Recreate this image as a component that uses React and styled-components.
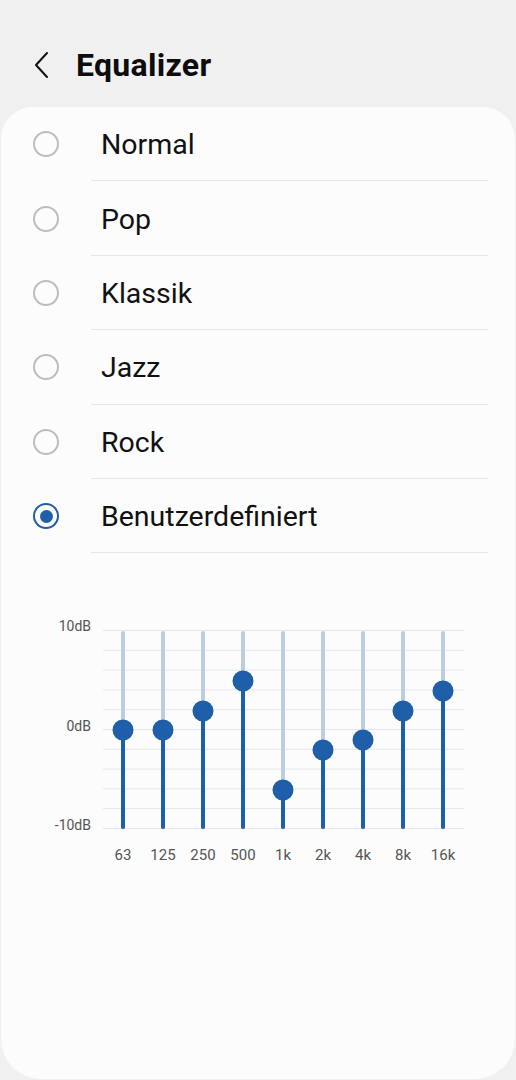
import React from "react";
import styled, { createGlobalStyle } from "styled-components";

const GlobalStyle = createGlobalStyle`
  html, body {
    margin: 0;
    padding: 0;
    background: #f0f0f0;
    font-family: Roboto, "Noto Sans", sans-serif;
    color: #111;
  }
`;

const presets = ["Normal", "Pop", "Klassik", "Jazz", "Rock", "Benutzerdefiniert"];

const bands = [
  { label: "63", value: 0 },
  { label: "125", value: 0 },
  { label: "250", value: 2 },
  { label: "500", value: 5 },
  { label: "1k", value: -6 },
  { label: "2k", value: -2 },
  { label: "4k", value: -1 },
  { label: "8k", value: 2 },
  { label: "16k", value: 4 },
];

const BLUE = "#1f5ea8";

const Screen = styled.div`
  width: 516px;
  min-height: 1080px;
  display: flex;
  flex-direction: column;
`;

const Header = styled.header`
  height: 107px;
  display: flex;
  align-items: center;
  padding: 22px 0 0 30px;
  box-sizing: border-box;
  gap: 22px;
`;

const BackButton = styled.button`
  width: 24px;
  height: 28px;
  border: 0;
  background: none;
  padding: 0;
  display: flex;
  align-items: center;
  justify-content: center;
  cursor: pointer;
`;

const Title = styled.h1`
  margin: 0;
  font-size: 32px;
  font-weight: 700;
  letter-spacing: 0.3px;
  color: #0d0d0d;
`;

const Card = styled.main`
  flex: 1;
  margin: 0 1px 1px;
  background: #fcfcfc;
  border-radius: 32px 32px 40px 40px;
  height: 972px;
  box-sizing: border-box;
`;

const List = styled.ul`
  list-style: none;
  margin: 0;
  padding: 0;
`;

const Row = styled.li`
  display: flex;
  height: 74.4px;
  cursor: pointer;
`;

const RadioCell = styled.div`
  width: 90px;
  display: flex;
  align-items: center;
  justify-content: center;
`;

const Radio = styled.span`
  width: 26px;
  height: 26px;
  box-sizing: border-box;
  border-radius: 50%;
  border: ${(p) => (p.$checked ? `2.5px solid ${BLUE}` : "2px solid #bdbdbd")};
  display: flex;
  align-items: center;
  justify-content: center;

  &::after {
    content: "";
    display: ${(p) => (p.$checked ? "block" : "none")};
    width: 13px;
    height: 13px;
    border-radius: 50%;
    background: ${BLUE};
  }
`;

const Label = styled.div`
  flex: 1;
  margin-right: 27px;
  padding-left: 10px;
  padding-top: 2px;
  display: flex;
  align-items: center;
  font-size: 28.5px;
  color: #111;
  border-bottom: 1px solid #e6e6e6;
`;

const Chart = styled.section`
  padding-top: 77px;
`;

const ChartRow = styled.div`
  display: flex;
  gap: 12px;
`;

const Axis = styled.div`
  width: 90px;
  height: 215px;
  margin-top: -12px;
  display: flex;
  flex-direction: column;
  justify-content: space-between;
  align-items: flex-end;
  font-size: 14px;
  line-height: 16px;
  color: #555;
`;

const Plot = styled.div`
  width: 361px;
  height: 198px;
  border-bottom: 1px solid #e4e6ea;
  background-image: linear-gradient(#e4e6ea 1px, transparent 1px);
  background-size: 100% 19.8px;
  display: flex;
`;

const SliderCol = styled.div`
  width: 40px;
  display: flex;
  justify-content: center;
`;

const Track = styled.div`
  position: relative;
  width: 4px;
  margin-top: 1px;
  height: 198px;
  border-radius: 2px;
  background: #bccde2;
`;

const Fill = styled.div`
  position: absolute;
  left: 0;
  right: 0;
  bottom: 0;
  border-radius: 2px;
  background: ${BLUE};
`;

const Knob = styled.div`
  position: absolute;
  left: 50%;
  width: 21px;
  height: 21px;
  border-radius: 50%;
  background: ${BLUE};
  transform: translate(-50%, -50%);
`;

const FreqRow = styled.div`
  display: flex;
  margin-left: 102px;
  margin-top: 13px;
`;

const Freq = styled.span`
  width: 40px;
  text-align: center;
  font-size: 15px;
  line-height: 18px;
  color: #555;
`;

function Slider({ value }) {
  const pct = ((value + 10) / 20) * 100;
  return (
    <SliderCol>
      <Track>
        <Fill style={{ height: `${pct}%` }} />
        <Knob style={{ top: `${100 - pct}%` }} />
      </Track>
    </SliderCol>
  );
}

export default function App() {
  const selected = "Benutzerdefiniert";
  return (
    <Screen>
      <GlobalStyle />
      <Header>
        <BackButton aria-label="Zurück">
          <svg width="16" height="28" viewBox="0 0 16 28" fill="none">
            <path d="M13 2 L2 14 L13 26" stroke="#111" strokeWidth="2" strokeLinecap="round" strokeLinejoin="round" />
          </svg>
        </BackButton>
        <Title>Equalizer</Title>
      </Header>
      <Card>
        <List>
          {presets.map((name) => (
            <Row key={name}>
              <RadioCell>
                <Radio $checked={name === selected} />
              </RadioCell>
              <Label>{name}</Label>
            </Row>
          ))}
        </List>
        <Chart>
          <ChartRow>
            <Axis>
              <span>10dB</span>
              <span>0dB</span>
              <span>-10dB</span>
            </Axis>
            <Plot>
              {bands.map((b) => (
                <Slider key={b.label} value={b.value} />
              ))}
            </Plot>
          </ChartRow>
          <FreqRow>
            {bands.map((b) => (
              <Freq key={b.label}>{b.label}</Freq>
            ))}
          </FreqRow>
        </Chart>
      </Card>
    </Screen>
  );
}
